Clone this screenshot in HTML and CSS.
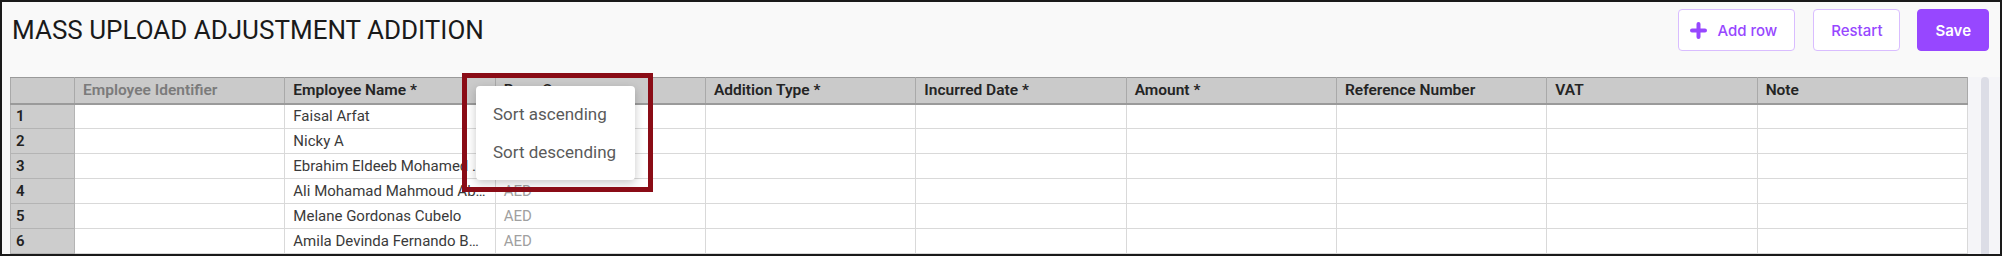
FILE: index.html
```html
<!DOCTYPE html>
<html>
<head>
    <title>Mass Upload Adjustment Addition</title>
    <link rel="stylesheet" href="styles.css">
</head>
<body>
    <div class="frame">
        <div class="topbar">
            <h2>MASS UPLOAD ADJUSTMENT ADDITION</h2>
            <div class="actions">
                <button class="btn btn-outline">
                    <svg class="plus" width="17" height="17" viewBox="0 0 17 17">
                        <path d="M8.5 2v13M2 8.5h13" stroke="currentColor" stroke-width="4" stroke-linecap="round"/>
                    </svg>
                    Add row
                </button>
                <button class="btn btn-outline">Restart</button>
                <button class="btn btn-primary">Save</button>
            </div>
        </div>

        <div class="grid-wrap">
            <table class="grid">
                <colgroup>
                    <col class="col-num">
                    <col span="9">
                </colgroup>
                <thead>
                    <tr>
                        <th class="num"></th>
                        <th class="muted">Employee Identifier</th>
                        <th>Employee Name *</th>
                        <th>Base Currency</th>
                        <th>Addition Type *</th>
                        <th>Incurred Date *</th>
                        <th>Amount *</th>
                        <th>Reference Number</th>
                        <th>VAT</th>
                        <th>Note</th>
                    </tr>
                </thead>
                <tbody>
                    <tr><td class="num">1</td><td></td><td>Faisal Arfat</td><td class="ccy">AED</td><td></td><td></td><td></td><td></td><td></td><td></td></tr>
                    <tr><td class="num">2</td><td></td><td>Nicky A</td><td class="ccy">AED</td><td></td><td></td><td></td><td></td><td></td><td></td></tr>
                    <tr><td class="num">3</td><td></td><td>Ebrahim Eldeeb Mohamed Abdelrahman</td><td class="ccy">AED</td><td></td><td></td><td></td><td></td><td></td><td></td></tr>
                    <tr><td class="num">4</td><td></td><td>Ali Mohamad Mahmoud Abdulla Alhammadi</td><td class="ccy">AED</td><td></td><td></td><td></td><td></td><td></td><td></td></tr>
                    <tr><td class="num">5</td><td></td><td>Melane Gordonas Cubelo</td><td class="ccy">AED</td><td></td><td></td><td></td><td></td><td></td><td></td></tr>
                    <tr><td class="num">6</td><td></td><td>Amila Devinda Fernando Bogahawatte</td><td class="ccy">AED</td><td></td><td></td><td></td><td></td><td></td><td></td></tr>
                </tbody>
            </table>
            <div class="scroll-gutter">
                <div class="scroll-thumb"></div>
            </div>
        </div>

        <!-- annotation box round the column menu -->
        <div class="highlight"></div>
        <div class="col-menu">
            <div class="menu-item">Sort ascending</div>
            <div class="menu-item">Sort descending</div>
        </div>
    </div>
</body>
</html>
```

FILE: styles.css
```css
* {
    box-sizing: border-box;
}

body {
    margin: 0;
    background: #fff;
    font-family: 'Roboto', sans-serif;
}

.frame {
    position: relative;
    width: 2002px;
    height: 256px;
    border: 2px solid #1a1a1a;
    background: #f9f9f9;
    overflow: hidden;
}

.topbar {
    display: flex;
    justify-content: space-between;
    align-items: center;
    padding: 7px 11px 0 10px;
}

h2 {
    margin: 0;
    font-family: 'Roboto', sans-serif;
    font-weight: 400;
    font-size: 26px;
    color: #1a1a1a;
}

.actions {
    display: flex;
    gap: 17px;
}

.btn {
    height: 42px;
    padding: 0 17px;
    border-radius: 4px;
    font-family: 'Inter', sans-serif;
    font-size: 15px;
    font-weight: 500;
    display: flex;
    align-items: center;
    cursor: pointer;
}

.btn-outline {
    background: #fff;
    color: #9747ff;
    border: 1px solid #d9bdff;
}

.btn-outline:first-child {
    padding-left: 11px;
    margin-right: 1px;
}

.plus {
    margin-right: 10px;
}

.btn-primary {
    background: #9747ff;
    border: 1px solid #9747ff;
    color: #fff;
    font-weight: 600;
}

.grid-wrap {
    display: flex;
    align-items: flex-start;
    margin-top: 26px;
    padding-left: 8px;
}

.grid {
    width: 1958px;
    table-layout: fixed;
    border-collapse: collapse;
    font-size: 15px;
    background: #fff;
}

.col-num {
    width: 64px;
}

.grid th {
    height: 26px;
    background: #cacaca;
    border: 1px solid #a9a9a9;
    border-top-color: #9a9a9a;
    border-bottom: 2px solid #9a9a9a;
    text-align: left;
    padding: 0 8px;
    font-size: 15.5px;
    font-weight: 600;
    color: #242424;
    white-space: nowrap;
    overflow: hidden;
}

.grid th.muted {
    color: #7b7b7b;
}

.grid td {
    height: 25px;
    line-height: 23px;
    border: 1px solid #d9d9d9;
    padding: 0 8px;
    color: #3a3a3a;
    white-space: nowrap;
    overflow: hidden;
    text-overflow: ellipsis;
}

.grid td.num {
    background: #cdcdcd;
    border-color: #b4b4b4;
    padding: 0 5px;
    font-weight: 600;
    color: #222;
}

.grid td.ccy {
    color: #a0a0a0;
}

.scroll-gutter {
    width: 32px;
    height: 200px;
    padding-left: 13px;
    background: #f5f5f8;
}

.scroll-thumb {
    width: 8px;
    height: 100%;
    border-radius: 4px 4px 0 0;
    background: #dcdde6;
}

.highlight {
    position: absolute;
    left: 460px;
    top: 71px;
    width: 191px;
    height: 119px;
    border: 5px solid #8a0c16;
    z-index: 2;
}

.col-menu {
    position: absolute;
    left: 474px;
    top: 84px;
    width: 159px;
    padding: 9px 0;
    background: #fff;
    border-radius: 4px;
    box-shadow: 0 3px 10px rgba(0, 0, 0, 0.22);
    z-index: 1;
}

.menu-item {
    height: 38px;
    line-height: 38px;
    padding-left: 17px;
    font-size: 17px;
    color: #5a5a5a;
}
```
